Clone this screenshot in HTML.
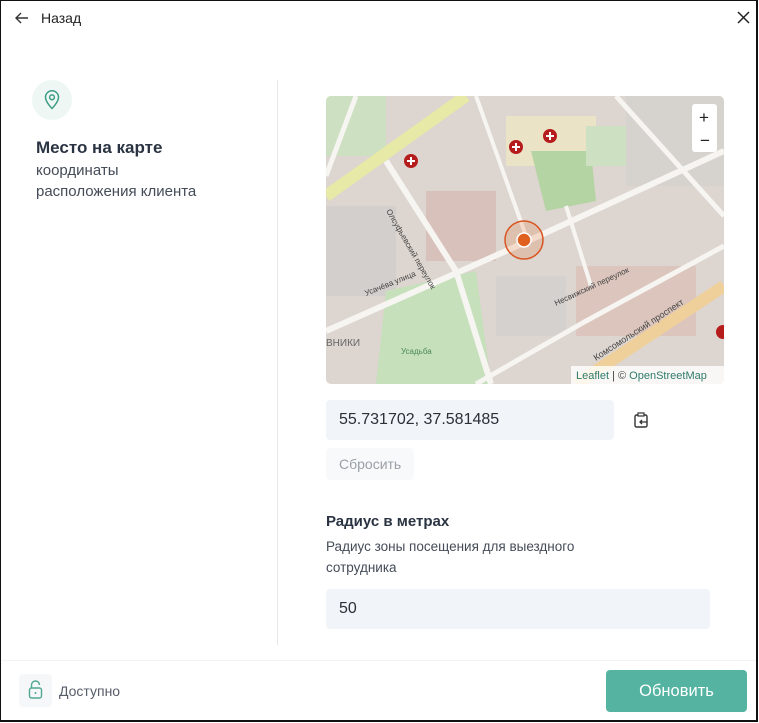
<!DOCTYPE html>
<html><head><meta charset="utf-8"><style>
*{box-sizing:border-box;margin:0;padding:0}
body{width:759px;height:723px;background:#fff;font-family:"Liberation Sans",sans-serif;position:relative;overflow:hidden;color:#2d3644}
.frame{position:absolute;left:0;top:0;width:758px;height:722px;border:1px solid #111;border-right:2px solid #111;border-bottom:2px solid #111}
.abs{position:absolute}
svg path{fill:none}
</style></head><body>
<div class="frame"></div>
<svg class="abs" style="left:14px;top:10px" width="16" height="16" viewBox="0 0 16 16"><path d="M14 8H2M7 3L2 8l5 5" stroke="#333" stroke-width="1.4"/></svg>
<div class="abs" style="left:41px;top:10px;font-size:14px;color:#222">Назад</div>
<svg class="abs" style="left:737px;top:11px" width="13" height="13" viewBox="0 0 13 13"><path d="M1 1l11 11M12 1L1 12" stroke="#222" stroke-width="1.5"/></svg>

<div class="abs" style="left:32px;top:80px;width:40px;height:40px;border-radius:50%;background:#eef7f4"></div>
<svg class="abs" style="left:43px;top:89px" width="18" height="21" viewBox="0 0 18 21"><path d="M9 19.5C9 19.5 2.5 13 2.5 8.2a6.5 6.5 0 0113 0C15.5 13 9 19.5 9 19.5z" stroke="#3f9c85" stroke-width="1.5"/><circle cx="9" cy="8.3" r="2.4" fill="none" stroke="#3f9c85" stroke-width="1.5"/></svg>
<div class="abs" style="left:36px;top:138px;font-size:17px;font-weight:bold;color:#2a3342">Место на карте</div>
<div class="abs" style="left:36px;top:160px;font-size:15px;line-height:21px;color:#444c58">координаты<br>расположения клиента</div>
<div class="abs" style="left:277px;top:80px;width:1px;height:565px;background:#e6e8eb"></div>

<div class="abs" style="left:326px;top:96px;width:398px;height:288px;border-radius:5px;overflow:hidden">
<svg width="398" height="288" viewBox="0 0 398 288">
<rect width="398" height="288" fill="#ddd5cf"/>
<rect x="100" y="95" width="70" height="70" fill="#d8c0bb"/>
<rect x="250" y="170" width="120" height="70" fill="#dbc5bd"/>
<rect x="170" y="180" width="70" height="60" fill="#d4d1cf"/>
<rect x="0" y="110" width="70" height="90" fill="#d3cfcc"/>
<rect x="180" y="20" width="90" height="50" fill="#ebe3c6"/>
<rect x="300" y="0" width="98" height="90" fill="#d6d2ce"/>
<polygon points="205,55 265,55 270,105 220,115" fill="#b5d4a3"/>
<polygon points="60,195 150,175 165,288 50,288" fill="#c6e0bb"/>
<rect x="0" y="0" width="60" height="60" fill="#cde0c1"/>
<rect x="260" y="30" width="40" height="40" fill="#cde0c1"/>
<path d="M0 100L140 0" stroke="#e6eaa6" stroke-width="12"/>
<path d="M0 235L180 155L398 55" stroke="#f7f5f2" stroke-width="6"/>
<path d="M60 65L130 175L165 288" stroke="#f7f5f2" stroke-width="6"/>
<path d="M150 0L200 140" stroke="#f7f5f2" stroke-width="4"/>
<path d="M150 288L260 225L398 150" stroke="#f7f5f2" stroke-width="5"/>
<path d="M250 288L398 190" stroke="#efcf9a" stroke-width="12"/>
<path d="M290 0L398 120" stroke="#f7f5f2" stroke-width="5"/>
<path d="M240 110L265 190" stroke="#f7f5f2" stroke-width="4"/>
<path d="M30 0L0 80" stroke="#f7f5f2" stroke-width="5"/>
<g fill="#b51c1c"><circle cx="85" cy="65" r="7"/><circle cx="190" cy="51" r="7"/><circle cx="224" cy="40" r="7"/><circle cx="397" cy="236" r="7"/></g>
<g stroke="#fff" stroke-width="2"><path d="M81 65h8M85 61v8M186 51h8M190 47v8M220 40h8M224 36v8"/></g>
<circle cx="198" cy="144" r="19" fill="rgba(230,110,50,0.2)" stroke="#d9551f" stroke-width="1.5"/>
<circle cx="198" cy="144" r="7" fill="#e0601f" stroke="#fff" stroke-width="1.5"/>
<text x="60" y="115" font-size="8" fill="#444" transform="rotate(60 60 115)" font-family="Liberation Sans">Олсуфьевский переулок</text>
<text x="40" y="200" font-size="8" fill="#444" transform="rotate(-22 40 200)" font-family="Liberation Sans">Усачёва улица</text>
<text x="230" y="210" font-size="8" fill="#444" transform="rotate(-25 230 210)" font-family="Liberation Sans">Несвижский переулок</text>
<text x="270" y="265" font-size="9" fill="#444" transform="rotate(-33 270 265)" font-family="Liberation Sans">Комсомольский проспект</text>
<text x="0" y="250" font-size="10" fill="#666" font-family="Liberation Sans">ВНИКИ</text>
<text x="75" y="258" font-size="8" fill="#4a8a55" font-family="Liberation Sans">Усадьба</text>
<rect x="366" y="8" width="25" height="48" rx="3" fill="#fff"/>
<text x="373" y="27" font-size="17" fill="#222" font-family="Liberation Sans">+</text>
<text x="374" y="50" font-size="17" fill="#222" font-family="Liberation Sans">−</text>
<rect x="245" y="270" width="153" height="18" fill="rgba(255,255,255,0.8)"/>
<text x="250" y="283" font-size="11" fill="#2f7a6a" font-family="Liberation Sans">Leaflet <tspan fill="#444">| ©</tspan> OpenStreetMap</text>
</svg></div>

<div class="abs" style="left:326px;top:400px;width:288px;height:40px;border-radius:4px;background:#f1f4f8;padding:11px 13px;font-size:16px;color:#2a2f38">55.731702, 37.581485</div>
<svg class="abs" style="left:633px;top:412px" width="17" height="17" viewBox="0 0 17 17"><rect x="2" y="3" width="12" height="12" rx="1.5" fill="none" stroke="#333" stroke-width="1.4"/><rect x="5" y="1" width="6" height="3" fill="#fff" stroke="#333" stroke-width="1.2"/><path d="M14 10H7M9 8l-2 2 2 2" stroke="#333" stroke-width="1.3"/></svg>
<div class="abs" style="left:326px;top:448px;width:88px;height:32px;border-radius:4px;background:#f8f9fa;padding:8px 13px;font-size:14px;color:#9aa0a8">Сбросить</div>

<div class="abs" style="left:326px;top:513px;font-size:15px;font-weight:bold;color:#2a3342">Радиус в метрах</div>
<div class="abs" style="left:326px;top:536px;font-size:13.5px;line-height:21px;color:#444c58;width:290px">Радиус зоны посещения для выездного сотрудника</div>
<div class="abs" style="left:326px;top:589px;width:384px;height:40px;border-radius:4px;background:#f1f4f8;padding:11px 13px;font-size:16px;color:#2a2f38">50</div>

<div class="abs" style="left:2px;top:660px;width:754px;height:1px;background:#f2f3f5"></div>
<div class="abs" style="left:19px;top:674px;width:33px;height:33px;border-radius:4px;background:#f5f7f9"></div>
<svg class="abs" style="left:28px;top:680px" width="15" height="20" viewBox="0 0 15 20"><path d="M3.5 8V5a4 4 0 018 0" stroke="#4fa893" stroke-width="1.4"/><rect x="1.5" y="8" width="12" height="10" rx="2" fill="none" stroke="#4fa893" stroke-width="1.4"/><circle cx="7.5" cy="13" r="1" fill="#4fa893"/></svg>
<div class="abs" style="left:59px;top:683px;font-size:14px;color:#555d68">Доступно</div>
<div class="abs" style="left:606px;top:670px;width:141px;height:42px;border-radius:4px;background:#54b3a1;color:#fff;font-size:16.5px;text-align:center;line-height:42px">Обновить</div>
</body></html>
